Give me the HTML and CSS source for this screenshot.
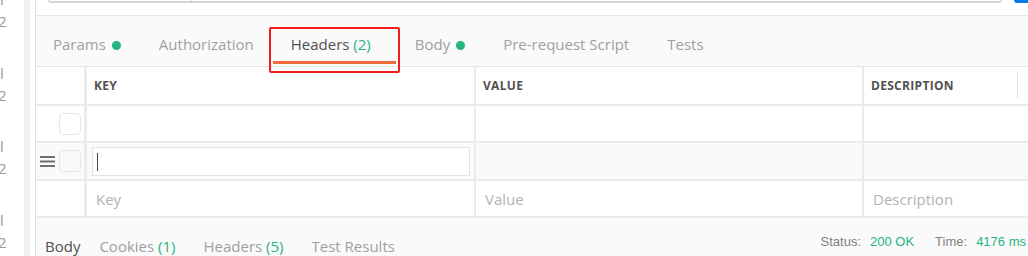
FILE: index.html
```html
<!DOCTYPE html>
<html lang="en">
  <head>
    <meta charset="UTF-8" />
    <meta name="viewport" content="width=device-width, initial-scale=1.0" />
    <title>Headers</title>
    <link rel="stylesheet" href="styles.css">
  </head>
  <body>
    <div class="app">
      <aside class="history">
        <div class="history-item"><span>l</span><span>2</span></div>
        <div class="history-item"><span>l</span><span>2</span></div>
        <div class="history-item"><span>l</span><span>2</span></div>
        <div class="history-item"><span>l</span><span>2</span></div>
      </aside>
      <div class="splitter"></div>
      <main class="request">
        <div class="url-strip">
          <div class="url-input"><div class="url-method"></div></div>
          <div class="send-btn"></div>
        </div>
        <nav class="tabs">
          <div class="tab">Params<span class="dot"></span></div>
          <div class="tab">Authorization</div>
          <div class="tab active">Headers <span class="count">(2)</span></div>
          <div class="tab">Body<span class="dot"></span></div>
          <div class="tab">Pre-request Script</div>
          <div class="tab">Tests</div>
        </nav>
        <div class="kv-table">
          <div class="kv-row kv-head">
            <div class="cell cell-check"></div>
            <div class="cell">KEY</div>
            <div class="cell">VALUE</div>
            <div class="cell cell-desc">DESCRIPTION<span class="bulk-divider"></span></div>
          </div>
          <div class="kv-row">
            <div class="cell cell-check"><span class="checkbox"></span></div>
            <div class="cell"></div>
            <div class="cell"></div>
            <div class="cell cell-desc"></div>
          </div>
          <div class="kv-row kv-editing">
            <div class="cell cell-check">
              <svg class="drag" width="15" height="11" viewBox="0 0 15 11">
                <rect x="0" y="0" width="15" height="2" fill="#6f6f6f" />
                <rect x="0" y="4.5" width="15" height="2" fill="#6f6f6f" />
                <rect x="0" y="9" width="15" height="2" fill="#6f6f6f" />
              </svg>
              <span class="checkbox"></span>
            </div>
            <div class="cell cell-input"><div class="input"><span class="caret"></span></div></div>
            <div class="cell"></div>
            <div class="cell cell-desc"></div>
          </div>
          <div class="kv-row">
            <div class="cell cell-check"></div>
            <div class="cell placeholder">Key</div>
            <div class="cell placeholder">Value</div>
            <div class="cell cell-desc placeholder">Description</div>
          </div>
        </div>
        <div class="response-bar">
          <div class="res-tab active">Body</div>
          <div class="res-tab">Cookies <span class="count">(1)</span></div>
          <div class="res-tab">Headers <span class="count">(5)</span></div>
          <div class="res-tab">Test Results</div>
          <div class="status">
            <span>Status:</span>
            <span class="status-value">200 OK</span>
            <span class="status-label">Time:</span>
            <span class="status-value">4176 ms</span>
          </div>
        </div>
      </main>
    </div>
    <div class="highlight"></div>
  </body>
</html>
```

FILE: styles.css
```css
body {
  margin: 0;
  position: relative;
  width: 1028px;
  height: 256px;
  overflow: hidden;
  background: #fff;
  font-family: "Open Sans", sans-serif;
}
.app {
  display: flex;
  height: 256px;
}
.history {
  width: 24px;
  margin-top: -12px;
  color: #999;
  font-size: 15px;
  line-height: 22px;
  overflow: hidden;
}
.history-item {
  display: flex;
  flex-direction: column;
  height: 73.5px;
}
.history-item span:last-child {
  margin-left: -2px;
}
.splitter {
  width: 6px;
  margin-right: 5px;
  background: #efefef;
}
.request {
  flex: 1;
  display: flex;
  flex-direction: column;
  border-left: 1px solid #e0e0e0;
}
.url-strip {
  display: flex;
  height: 15px;
  border-bottom: 1px solid #e8e8e8;
}
.url-input {
  width: 952px;
  height: 1px;
  margin-left: 12px;
  border: 1px solid #d4d4d4;
  border-top: 0;
  border-bottom-width: 2px;
  border-radius: 0 0 3px 3px;
}
.url-method {
  width: 142px;
  height: 1px;
  border-right: 1px solid #d4d4d4;
}
.send-btn {
  flex: 1;
  height: 3px;
  margin-left: 12px;
  background: #097bed;
  border-radius: 0 0 0 3px;
}
.tabs {
  display: flex;
  height: 50px;
  background: #fafafa;
  border-bottom: 1px solid #e6e6e6;
}
.tab {
  box-sizing: border-box;
  height: 48px;
  padding: 18px 19px 0;
  border-bottom: 3px solid transparent;
  font-size: 15px;
  line-height: 20px;
  color: #a0a0a0;
  white-space: nowrap;
}
.tab:first-child {
  margin-left: -2px;
}
.tab.active {
  color: #505050;
  padding-left: 18px;
  padding-right: 25px;
  border-bottom-color: #f26b3a;
}
.dot {
  display: inline-block;
  width: 9px;
  height: 9px;
  margin-left: 6px;
  border-radius: 50%;
  background: #26b47f;
}
.count {
  color: #26b47f;
}
.kv-row {
  display: grid;
  grid-template-columns: 51px 389px 388px 1fr;
  box-sizing: border-box;
  height: 37px;
  border-bottom: 2px solid #ebebeb;
}
.kv-head {
  height: 39px;
}
.kv-editing {
  height: 38px;
  background: #fafafa;
}
.cell {
  display: flex;
  align-items: center;
  box-sizing: border-box;
  padding-left: 7px;
  border-right: 2px solid #ebebeb;
  font-size: 15px;
  line-height: 20px;
}
.kv-head .cell {
  font-size: 12px;
  font-weight: bold;
  letter-spacing: 0.3px;
  color: #505050;
}
.cell-check {
  justify-content: flex-end;
  padding: 0 3px 0 4px;
  border-right-width: 3px;
}
.cell-desc {
  justify-content: space-between;
  border-right: 0;
}
.bulk-divider {
  width: 1px;
  height: 25px;
  margin-right: 10px;
  background: #e0e0e0;
}
.checkbox {
  box-sizing: border-box;
  width: 22px;
  height: 22px;
  border: 1px solid #e6e6e6;
  border-radius: 4px;
  background: #fff;
}
.kv-editing .checkbox {
  background: #fafafa;
}
.drag {
  margin-right: auto;
}
.cell-input {
  padding: 4px 4px 3px 5px;
}
.input {
  display: flex;
  align-items: center;
  box-sizing: border-box;
  width: 100%;
  height: 100%;
  padding-left: 4px;
  border: 1px solid #e3e3e3;
  background: #fff;
}
.caret {
  width: 1px;
  height: 18px;
  background: #444;
}
.placeholder {
  padding-left: 9px;
  color: #b3b3b3;
}
.response-bar {
  flex: 1;
  display: flex;
  padding: 18px 0 0 9px;
  background: #fafafa;
  font-size: 15px;
  line-height: 20px;
  color: #a0a0a0;
  white-space: nowrap;
}
.res-tab {
  margin-right: 28px;
}
.res-tab.active {
  margin-right: 19px;
  color: #505050;
}
.status {
  display: flex;
  margin: -4px 0 0 auto;
  padding-right: 2px;
  font-family: "Liberation Sans", Arial, sans-serif;
  font-size: 13px;
  color: #808080;
}
.status-value {
  margin-left: 9px;
  color: #26b47f;
}
.status-label {
  margin-left: 21px;
}
.highlight {
  position: absolute;
  left: 269px;
  top: 27px;
  width: 131px;
  height: 46px;
  box-sizing: border-box;
  border: 2px solid #f21c1c;
  border-radius: 2px;
}
```
